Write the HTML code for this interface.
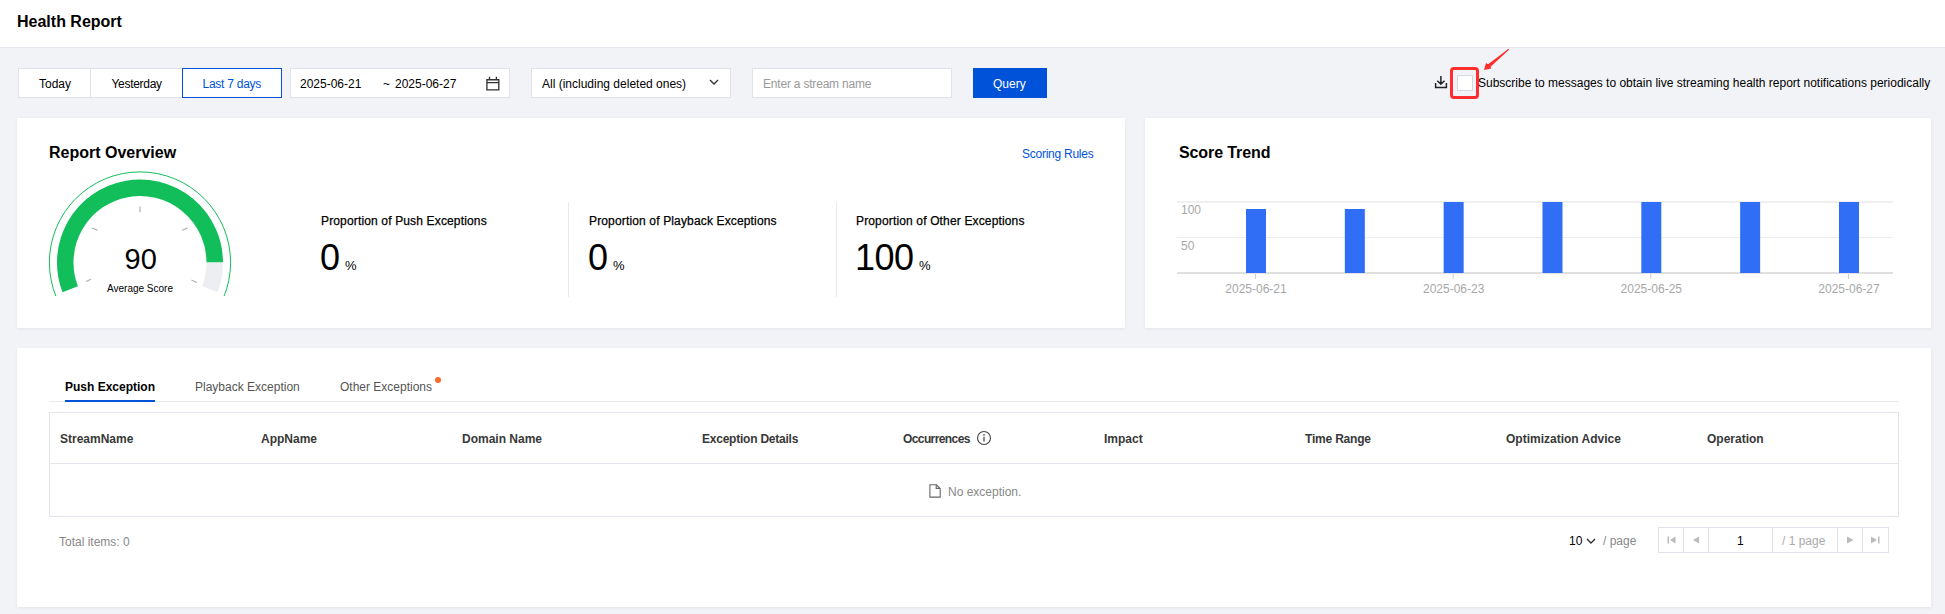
<!DOCTYPE html>
<html><head><meta charset="utf-8">
<style>
*{box-sizing:border-box;margin:0;padding:0}
html,body{width:1945px;height:614px;overflow:hidden}
body{background:#f2f3f7;font-family:"Liberation Sans",sans-serif;font-size:12px;color:#000;position:relative}
.a{position:absolute;white-space:nowrap;line-height:1}
.hdr{position:absolute;left:0;top:0;width:1945px;height:48px;background:#fff;border-bottom:1px solid #e4e6eb}
.box{position:absolute;background:#fff;border:1px solid #dfe2e8}
.card{position:absolute;background:#fff;box-shadow:0 1px 3px rgba(54,58,80,0.08)}
.t12{font-size:12px}
.gray{color:#888}
.lbl{letter-spacing:0.15px;-webkit-text-stroke:0.25px #000}
.th{font-weight:bold;color:#383838;font-size:12px}
</style></head>
<body>
<div class="hdr"></div>
<div class="a" style="left:17px;top:13.5px;font-size:16px;font-weight:bold;color:#000">Health Report</div>

<!-- toolbar -->
<div class="box" style="left:18px;top:68px;width:73px;height:30px"></div>
<div class="box" style="left:90px;top:68px;width:93px;height:30px"></div>
<div class="box" style="left:182px;top:68px;width:100px;height:30px;border-color:#0052d9"></div>
<div class="a" style="left:39px;top:77.8px;color:#000">Today</div>
<div class="a" style="left:111.5px;top:77.8px;color:#000;letter-spacing:-0.3px">Yesterday</div>
<div class="a" style="left:202.5px;top:77.8px;color:#0052d9;letter-spacing:-0.25px">Last 7 days</div>

<div class="box" style="left:290px;top:68px;width:220px;height:30px"></div>
<div class="a" style="left:300px;top:77.8px">2025-06-21</div>
<div class="a" style="left:383px;top:77.8px">~</div>
<div class="a" style="left:395px;top:77.8px">2025-06-27</div>
<svg class="a" style="left:485px;top:76px" width="16" height="16" viewBox="485 76 16 16"><path d="M486.9 79.7H498.8V89.9H486.9Z M486.9 82.6H498.8 M489.5 76.8v3 M496.4 76.8v3" fill="none" stroke="#333" stroke-width="1.35"/></svg>

<div class="box" style="left:531px;top:68px;width:200px;height:30px"></div>
<div class="a" style="left:542px;top:77.8px">All (including deleted ones)</div>
<svg class="a" style="left:709px;top:78px" width="10" height="8" viewBox="0 0 10 8"><path d="M1 2l4 4 4-4" fill="none" stroke="#333" stroke-width="1.4"/></svg>

<div class="box" style="left:752px;top:68px;width:200px;height:30px"></div>
<div class="a" style="left:763px;top:77.8px;color:#999;letter-spacing:-0.2px">Enter a stream name</div>

<div class="a" style="left:973px;top:68px;width:74px;height:30px;background:#0052d9"></div>
<div class="a" style="left:993px;top:77.8px;color:#fff">Query</div>

<svg class="a" style="left:1430px;top:70px" width="24" height="24" viewBox="1430 70 24 24"><path d="M1440.9 76v8 M1437.3 80.7l3.6 3.6 3.6-3.6 M1435.6 83v4.4h10.8V83" fill="none" stroke="#222" stroke-width="1.5"/></svg>
<div class="a" style="left:1457px;top:75px;width:16px;height:16px;background:#fff;border:1px solid #d4d9e2"></div>
<div class="a" style="left:1450.4px;top:67.1px;width:29.1px;height:32.4px;border:3px solid #ff2d2d;border-radius:4px"></div>
<svg class="a" style="left:1475px;top:44px" width="40" height="32" viewBox="1475 44 40 32"><path d="M1484 70 L1486 63 L1488.1 64.2 L1508.6 48.7 L1509.2 49.4 L1490.6 66.8 L1491.2 68.6 Z" fill="#ff2d2d"/></svg>
<div class="a" style="left:1478px;top:76.5px;color:#000">Subscribe to messages to obtain live streaming health report notifications periodically</div>

<!-- card 1 -->
<div class="card" style="left:17px;top:118px;width:1108px;height:210px"></div>
<div class="a" style="left:49px;top:145.3px;font-size:16px;font-weight:bold">Report Overview</div>
<div class="a" style="left:1022px;top:147.8px;color:#0052d9;letter-spacing:-0.25px">Scoring Rules</div>

<svg class="a" style="left:40px;top:160px" width="200" height="140" viewBox="40 160 200 140">
  <defs><clipPath id="gc"><rect x="40" y="160" width="200" height="136"/></clipPath></defs>
  <g clip-path="url(#gc)">
    <circle cx="140" cy="262.5" r="90.6" fill="none" stroke="#12be5a" stroke-width="1"/>
  </g>
  <path d="M70.21 289.29 A74.75 74.75 0 1 1 214.75 262.50" fill="none" stroke="#12be5a" stroke-width="16.5"/>
  <path d="M214.75 262.50 A74.75 74.75 0 0 1 209.79 289.29" fill="none" stroke="#eceef2" stroke-width="16.5"/>
  <path d="M92.2 227.9L97.6 230.2 M140 206.4V212.3 M182.2 230.2L187.6 227.9 M86.2 281.6L90.9 279.3 M191.5 280.1L196.6 282.4" stroke="#a9abb0" stroke-width="1.1"/>
</svg>

<div class="a" style="left:124.5px;top:245px;font-size:29px;color:#000">90</div>
<div class="a" style="left:107px;top:284px;font-size:10px;color:#000">Average Score</div>

<div class="a lbl" style="left:321px;top:215px">Proportion of Push Exceptions</div>
<div class="a lbl" style="left:589px;top:215px">Proportion of Playback Exceptions</div>
<div class="a lbl" style="left:856px;top:215px">Proportion of Other Exceptions</div>
<div class="a" style="left:320px;top:239.5px;font-size:36px">0</div>
<div class="a" style="left:345px;top:258.5px;font-size:13px">%</div>
<div class="a" style="left:588px;top:239.5px;font-size:36px">0</div>
<div class="a" style="left:613px;top:258.5px;font-size:13px">%</div>
<div class="a" style="left:855px;top:239.5px;font-size:36px;letter-spacing:-0.5px">100</div>
<div class="a" style="left:919px;top:258.5px;font-size:13px">%</div>
<div class="a" style="left:568px;top:202px;width:1px;height:95px;background:#e7eaef"></div>
<div class="a" style="left:836px;top:202px;width:1px;height:95px;background:#e7eaef"></div>

<!-- card 2 -->
<div class="card" style="left:1145px;top:118px;width:786px;height:210px"></div>
<div class="a" style="left:1179px;top:144.5px;font-size:16px;font-weight:bold;letter-spacing:-0.1px">Score Trend</div>

<svg class="a" style="left:1145px;top:118px" width="786" height="210" viewBox="1145 118 786 210">
<path d="M1177 202H1893" stroke="#f0f0f0" stroke-width="2"/><path d="M1177 237.5H1893" stroke="#ececec" stroke-width="1"/>
<path d="M1177 273H1893" stroke="#e0e0e0" stroke-width="2"/>
<rect x="1246.00" y="209" width="20" height="64" fill="#2f6ef5"/><rect x="1344.83" y="209" width="20" height="64" fill="#2f6ef5"/><rect x="1443.66" y="202" width="20" height="71" fill="#2f6ef5"/><rect x="1542.49" y="202" width="20" height="71" fill="#2f6ef5"/><rect x="1641.32" y="202" width="20" height="71" fill="#2f6ef5"/><rect x="1740.15" y="202" width="20" height="71" fill="#2f6ef5"/><rect x="1838.98" y="202" width="20" height="71" fill="#2f6ef5"/><path d="M1255.5 274v5" stroke="#cccccc" stroke-width="1"/><path d="M1453.2 274v5" stroke="#cccccc" stroke-width="1"/><path d="M1650.8 274v5" stroke="#cccccc" stroke-width="1"/><path d="M1848.5 274v5" stroke="#cccccc" stroke-width="1"/>
<g font-family="Liberation Sans" font-size="12" fill="#a8a8a8"><text x="1256.0" y="293" text-anchor="middle">2025-06-21</text><text x="1453.7" y="293" text-anchor="middle">2025-06-23</text><text x="1651.3" y="293" text-anchor="middle">2025-06-25</text><text x="1849.0" y="293" text-anchor="middle">2025-06-27</text>
<text x="1181" y="214">100</text><text x="1181" y="250">50</text></g>
</svg>
<!-- card 3 -->
<div class="card" style="left:17px;top:348px;width:1914px;height:259px"></div>

<div class="a" style="left:65px;top:381px;font-size:12px;font-weight:bold;color:#000">Push Exception</div>
<div class="a" style="left:195px;top:381px;font-size:12px;color:#555">Playback Exception</div>
<div class="a" style="left:340px;top:381px;font-size:12px;color:#555">Other Exceptions</div>
<div class="a" style="left:435px;top:377px;width:6px;height:6px;border-radius:50%;background:#f86b2a"></div>
<div class="a" style="left:49px;top:401px;width:1850px;height:1px;background:#e7eaef"></div>
<div class="a" style="left:65px;top:400px;width:90px;height:2px;background:#0052d9"></div>
<div class="a" style="left:49px;top:412px;width:1850px;height:105px;border:1px solid #e2e5ec"></div>
<div class="a" style="left:50px;top:463px;width:1848px;height:1px;background:#e2e5ec"></div>
<div class="a th" style="left:60px;top:433.2px">StreamName</div><div class="a th" style="left:261px;top:433.2px">AppName</div><div class="a th" style="left:462px;top:433.2px">Domain Name</div><div class="a th" style="left:702px;top:433.2px;letter-spacing:-0.23px">Exception Details</div><div class="a th" style="left:903px;top:433.2px;letter-spacing:-0.6px">Occurrences</div><div class="a th" style="left:1104px;top:433.2px">Impact</div><div class="a th" style="left:1305px;top:433.2px;letter-spacing:-0.2px">Time Range</div><div class="a th" style="left:1506px;top:433.2px">Optimization Advice</div><div class="a th" style="left:1707px;top:433.2px">Operation</div>
<svg class="a" style="left:976px;top:430px" width="16" height="16" viewBox="0 0 16 16"><circle cx="8" cy="8" r="6.5" fill="none" stroke="#444" stroke-width="1.1"/><path d="M8 6.8v4.6" stroke="#444" stroke-width="1.2"/><circle cx="8" cy="4.9" r="0.8" fill="#444"/></svg>
<svg class="a" style="left:926px;top:482px" width="18" height="18" viewBox="926 482 18 18"><path d="M929.9 484.8H936.5L940.2 488.5V497.1H929.9Z M936.2 484.8V488.4H940.2" fill="none" stroke="#666" stroke-width="1.1" stroke-linejoin="miter"/></svg>
<div class="a" style="left:948px;top:485.6px;color:#888">No exception.</div>
<div class="a" style="left:59px;top:535.8px;color:#888">Total items: 0</div>
<div class="a" style="left:1569px;top:534.5px;color:#000">10</div>
<svg class="a" style="left:1585px;top:536.5px" width="12" height="9" viewBox="0 0 12 9"><path d="M2 2l4 4 4-4" fill="none" stroke="#333" stroke-width="1.4"/></svg>
<div class="a" style="left:1603px;top:534.5px;color:#888">/ page</div>
<div class="a" style="left:1658px;top:527px;width:231px;height:26px;border:1px solid #dfe2e8"></div>
<div class="a" style="left:1683px;top:527px;width:1px;height:26px;background:#dfe2e8"></div>
<div class="a" style="left:1708px;top:527px;width:1px;height:26px;background:#dfe2e8"></div>
<div class="a" style="left:1772px;top:527px;width:1px;height:26px;background:#dfe2e8"></div>
<div class="a" style="left:1837px;top:527px;width:1px;height:26px;background:#dfe2e8"></div>
<div class="a" style="left:1862px;top:527px;width:1px;height:26px;background:#dfe2e8"></div>
<div class="a" style="left:1737px;top:534.5px;color:#000">1</div>
<div class="a" style="left:1782px;top:534.5px;color:#aaa">/ 1 page</div>
<svg class="a" style="left:1658px;top:527px" width="231" height="26" viewBox="1658 527 231 26">
<g fill="#bbb"><path d="M1667.5 536.5h1.5v7h-1.5z M1675.5 536.5v7l-5.5-3.5z"/><path d="M1699 536.5v7l-6-3.5z"/><path d="M1847 536.5v7l6.5-3.5z"/><path d="M1871 536.5v7l6-3.5z M1878 536.5h1.5v7H1878z"/></g></svg>
</body></html>
